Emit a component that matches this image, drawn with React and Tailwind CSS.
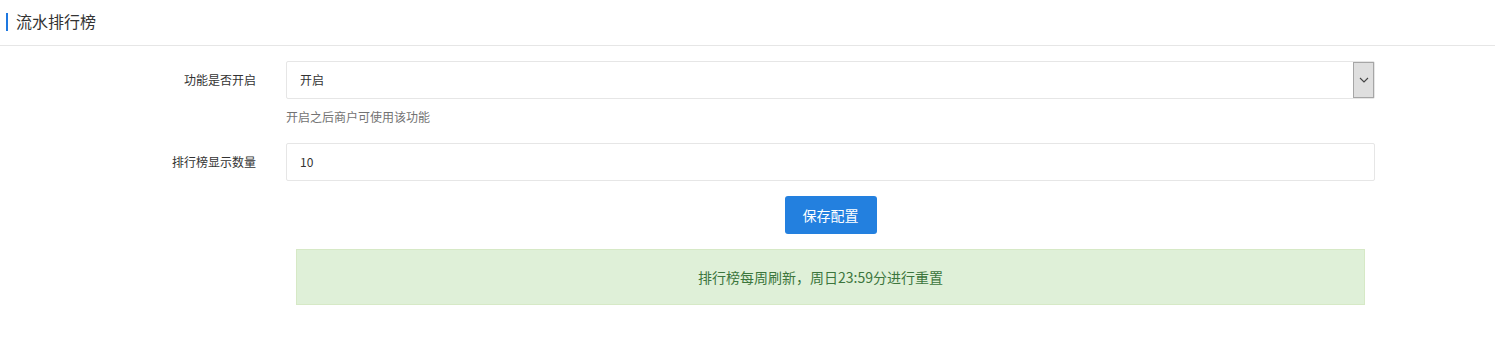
import React from "react";

const font = { fontFamily: '"Noto Sans CJK SC", "Liberation Sans", sans-serif' };

const App = () => {
  return (
    <div className="w-[1495px] h-[349px] bg-white text-[#333]" style={font}>
      <header className="h-[46px] flex items-center border-b border-[#e6e6e6] pl-[6px]">
        <span className="w-[2px] h-[18px] bg-[#1e78e0] mr-[8px] mb-[2px]" />
        <h1 className="text-[16px] leading-none text-[#333] mb-[3px]">流水排行榜</h1>
      </header>

      <div className="pt-[15px]">
        <div className="flex">
          <label className="w-[256px] text-right text-[12px] leading-[38px] h-[38px]">功能是否开启</label>
          <div className="ml-[30px] w-[1089px]">
            <div className="h-[38px] border border-[#e6e6e6] rounded-[2px] flex items-stretch">
              <span className="flex-1 text-[12px] leading-[36px] pl-[13px]">开启</span>
              <span className="w-[21px] bg-[#dfdfdf] border border-[#a6a6a6] flex items-center justify-center">
                <svg width="10" height="6" viewBox="0 0 10 6" fill="none">
                  <path d="M1 1l4 4 4-4" stroke="#444" strokeWidth="1.1" />
                </svg>
              </span>
            </div>
            <p className="text-[12px] text-[#737373] leading-none mt-[12px]">开启之后商户可使用该功能</p>
          </div>
        </div>

        <div className="flex mt-[20px]">
          <label className="w-[256px] text-right text-[12px] leading-[38px] h-[38px]">排行榜显示数量</label>
          <div className="ml-[30px] w-[1089px]">
            <div className="h-[38px] border border-[#e6e6e6] rounded-[2px] text-[12px] leading-[36px] pl-[13px]">10</div>
            <div className="flex justify-center mt-[15px]">
              <button className="w-[92px] h-[38px] bg-[#2380df] text-white text-[14px] rounded-[3px]">保存配置</button>
            </div>
            <div className="mx-[10px] mt-[15px] h-[56px] bg-[#dff0d8] border border-[#d6e9c6] text-[#3c763d] text-[14px] flex items-center justify-center pr-[20px]">
              排行榜每周刷新，周日23:59分进行重置
            </div>
          </div>
        </div>
      </div>
    </div>
  );
};

export default App;
